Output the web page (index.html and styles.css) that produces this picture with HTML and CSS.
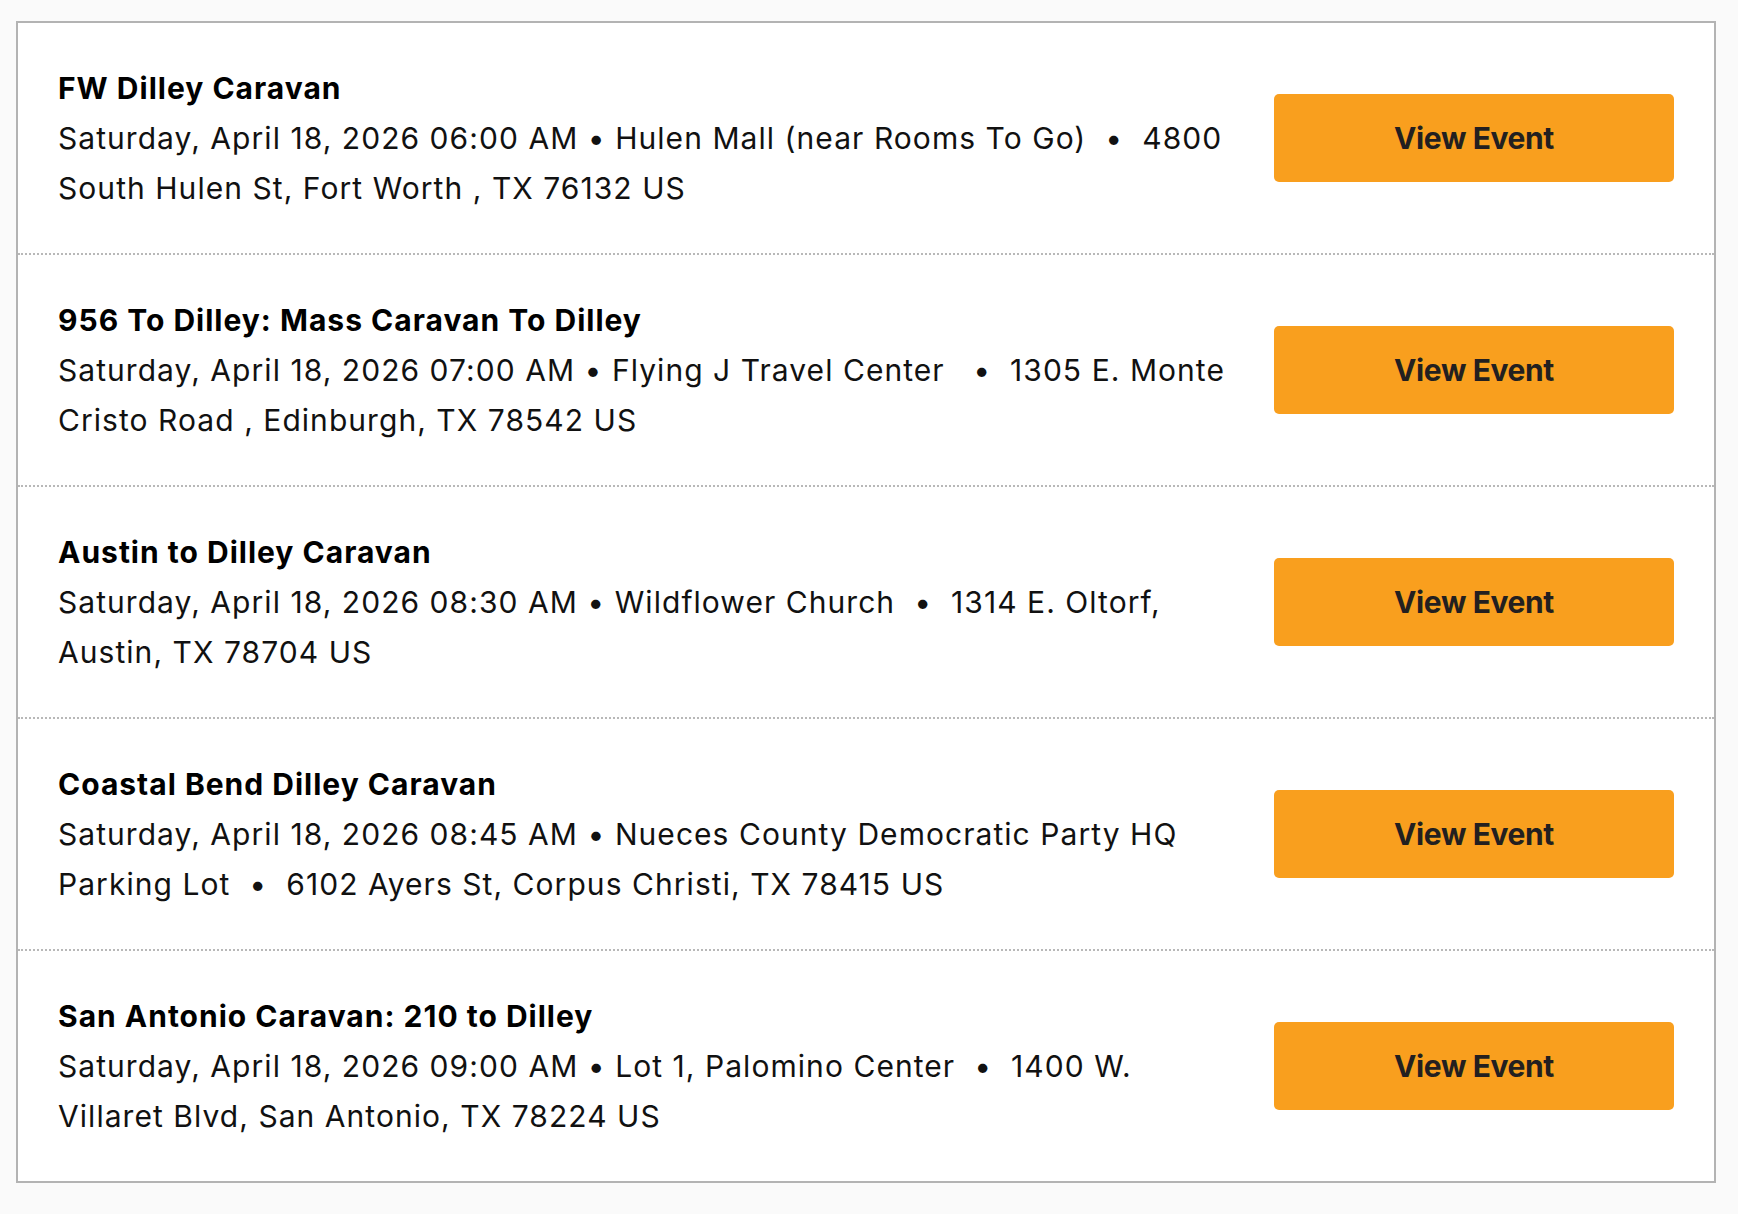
FILE: index.html
```html
<!DOCTYPE html>
<html lang="en">
<head>
<meta charset="utf-8">
<title>Events</title>
<link rel="stylesheet" href="styles.css">
</head>
<body>
<div class="card">
  <div class="row">
    <div class="info">
      <div class="title">FW Dilley Caravan</div>
      <div class="meta">Saturday, April 18, 2026 06:00 AM • Hulen Mall (near Rooms To Go) <span class="sep">&nbsp;•&nbsp;</span> 4800 South Hulen St, Fort Worth , TX 76132 US</div>
    </div>
    <a class="btn" href="#">View Event</a>
  </div>
  <div class="row">
    <div class="info">
      <div class="title">956 To Dilley: Mass Caravan To Dilley</div>
      <div class="meta">Saturday, April 18, 2026 07:00 AM • Flying J Travel Center &nbsp;<span class="sep">&nbsp;•&nbsp;</span> 1305 E. Monte Cristo Road , Edinburgh, TX 78542 US</div>
    </div>
    <a class="btn" href="#">View Event</a>
  </div>
  <div class="row">
    <div class="info">
      <div class="title">Austin to Dilley Caravan</div>
      <div class="meta">Saturday, April 18, 2026 08:30 AM • Wildflower Church <span class="sep">&nbsp;•&nbsp;</span> 1314 E. Oltorf, Austin, TX 78704 US</div>
    </div>
    <a class="btn" href="#">View Event</a>
  </div>
  <div class="row">
    <div class="info">
      <div class="title">Coastal Bend Dilley Caravan</div>
      <div class="meta">Saturday, April 18, 2026 08:45 AM • Nueces County Democratic Party HQ Parking Lot <span class="sep">&nbsp;•&nbsp;</span> 6102 Ayers St, Corpus Christi, TX 78415 US</div>
    </div>
    <a class="btn" href="#">View Event</a>
  </div>
  <div class="row">
    <div class="info">
      <div class="title">San Antonio Caravan: 210 to Dilley</div>
      <div class="meta">Saturday, April 18, 2026 09:00 AM • Lot 1, Palomino Center <span class="sep">&nbsp;•&nbsp;</span> 1400 W. Villaret Blvd, San Antonio, TX 78224 US</div>
    </div>
    <a class="btn" href="#">View Event</a>
  </div>
</div>
</body>
</html>
```
FILE: styles.css
```css
html, body {
  margin: 0;
  padding: 0;
  background: #fafafa;
}
body {
  font-family: Inter, "Liberation Sans", sans-serif;
  color: #000;
  padding: 21px 0 0 16px;
}
.card {
  width: 1696px;
  background: #fff;
  border: 2px solid #b3b3b3;
}
.row {
  display: flex;
  align-items: center;
  gap: 44px;
  padding: 40px 40px;
  border-bottom: 2px dotted #b8b8b8;
}
.row:last-child {
  border-bottom: none;
}
.info {
  flex: 1;
  min-width: 0;
}
.title {
  font-size: 30px;
  font-weight: 700;
  line-height: 50px;
  letter-spacing: 1px;
}
.meta {
  font-size: 30px;
  line-height: 50px;
  letter-spacing: 1.05px;
  color: #111;
}
.btn {
  flex: 0 0 400px;
  height: 88px;
  display: flex;
  align-items: center;
  justify-content: center;
  background: #f99f1e;
  border-radius: 5px;
  color: #231f20;
  font-size: 30px;
  font-weight: 700;
  letter-spacing: -0.4px;
  text-decoration: none;
}
```
